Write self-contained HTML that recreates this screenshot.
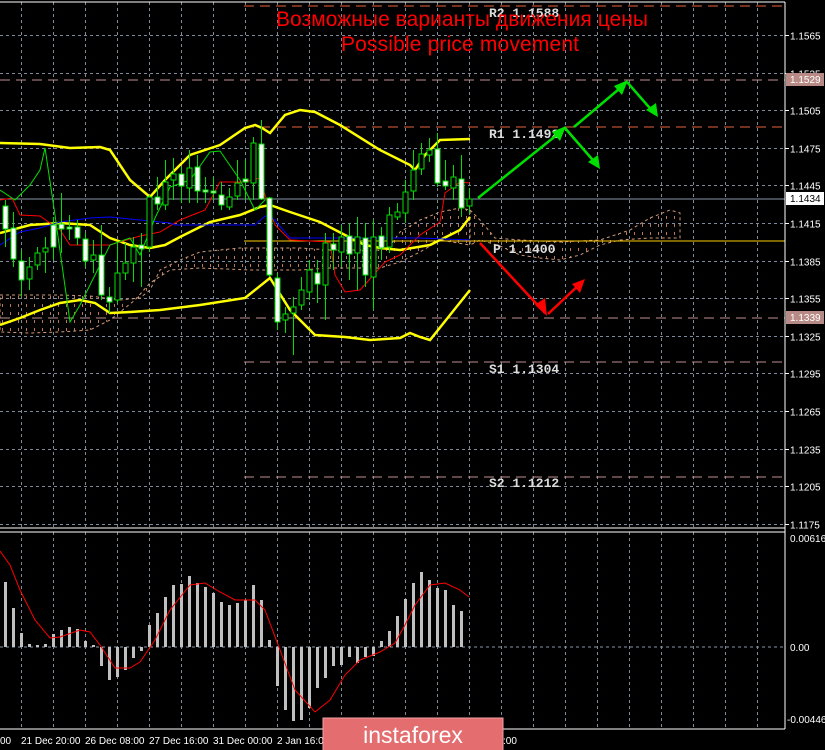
<!DOCTYPE html>
<html><head><meta charset="utf-8"><style>
html,body{margin:0;padding:0;background:#000;width:825px;height:750px;overflow:hidden}
svg{display:block}
text{font-family:"Liberation Sans",sans-serif}
.ax{fill:#fff;font-size:10px}
.lv{fill:#ddd;font-family:"Liberation Mono",monospace;font-size:13px;font-weight:bold}
</style></head><body>
<svg id="s" width="825" height="750" xmlns="http://www.w3.org/2000/svg">
<defs>
<pattern id="hatch" width="8" height="8" patternUnits="userSpaceOnUse">
<line x1="2.5" y1="0" x2="2.5" y2="3" stroke="#b87850" stroke-width="1"/>
</pattern>
</defs>
<rect width="825" height="750" fill="#000"/>
<g id="grid"></g>
<g>
<polygon points="0,295 60,295 90,296 120,300 140,298 150,290 160,270 180,260 200,252 240,248 300,248 330,250 380,250 390,246 400,232 420,220 440,212 460,208 470,210 470,245 440,240 420,252 400,262 380,268 330,268 300,270 250,270 200,268 170,270 150,283 135,300 125,308 110,320 90,330 60,332 30,333 0,332" fill="url(#hatch)" stroke="#d09a78" stroke-width="1" stroke-dasharray="3,3"/>
<polygon points="470,210 480,220 495,238 520,240 560,242 600,240 630,230 650,218 670,210 680,213 680,238 650,238 620,240 600,245 580,255 560,260 540,258 520,255 500,246 480,240 470,245" fill="url(#hatch)" stroke="#d09a78" stroke-width="1" stroke-dasharray="3,3"/>
</g>
<line x1="244" y1="6" x2="785" y2="6" stroke="#e8643c" stroke-width="1" stroke-dasharray="10,6"/>
<line x1="244" y1="127" x2="785" y2="127" stroke="#e8643c" stroke-width="1" stroke-dasharray="10,6"/>
<line x1="0" y1="80" x2="785" y2="80" stroke="#c09090" stroke-width="1" stroke-dasharray="10,6"/>
<line x1="0" y1="199" x2="785" y2="199" stroke="#8a96a8" stroke-width="1"/>
<line x1="244" y1="241" x2="785" y2="241" stroke="#ffcc00" stroke-width="1"/>
<line x1="0" y1="318" x2="785" y2="318" stroke="#c09090" stroke-width="1" stroke-dasharray="10,6"/>
<line x1="244" y1="362" x2="785" y2="362" stroke="#c09090" stroke-width="1" stroke-dasharray="10,6"/>
<line x1="244" y1="477" x2="785" y2="477" stroke="#c09090" stroke-width="1" stroke-dasharray="10,6"/>
<text class="lv" x="489" y="17">R2 1.1588</text>
<text class="lv" x="489" y="138">R1 1.1492</text>
<text class="lv" x="493" y="253">P 1.1400</text>
<text class="lv" x="489" y="373">S1 1.1304</text>
<text class="lv" x="489" y="487">S2 1.1212</text>
<polyline fill="none" stroke="#ffff00" stroke-width="2.5" points="0,143 40,144 70,148 100,147 110,150 130,180 150,197 165,180 190,155 220,145 245,128 255,125 262,128 270,133 285,115 300,110 315,112 340,125 380,150 410,165 415,170 425,155 440,140 470,139"/>
<polyline fill="none" stroke="#ffff00" stroke-width="2.5" points="0,233 30,225 60,223 90,225 110,238 130,245 150,248 165,245 180,237 210,222 240,215 260,207 270,205 290,212 320,222 345,235 365,245 380,248 400,250 430,245 460,230 470,217"/>
<polyline fill="none" stroke="#ffff00" stroke-width="2.5" points="0,325 20,318 40,310 60,303 80,300 95,303 110,313 130,312 160,310 200,305 245,298 270,278 290,310 315,335 345,337 370,340 400,338 410,333 420,337 430,340 450,315 470,290"/>
<polyline fill="none" stroke="#ff0000" stroke-width="1" points="0,200 12,198 20,215 40,216 50,223 60,230 70,245 80,245 110,245 140,236 160,232 180,220 205,210 220,182 245,182 260,178 268,205 275,225 290,240 330,242 335,275 345,292 360,290 385,262 400,255 420,235 440,222 445,193 460,182 470,183"/>
<polyline fill="none" stroke="#0000ff" stroke-width="1" points="0,245 20,232 40,228 60,222 90,218 110,217 170,223 175,225 255,225 265,216 272,217 290,238 420,238 470,240"/>
<polyline fill="none" stroke="#00e000" stroke-width="1" points="0,190 15,200 30,185 40,170 45,148 55,215 70,322 80,305 95,275 110,245 130,238 140,255 155,218 170,187 190,180 210,152 220,151 240,180 255,210 265,200"/>
<g id="candles"></g>
<g stroke-width="2.5" fill="none">
<polyline stroke="#00e000" points="478,198 563,130"/>
<polyline stroke="#00e000" points="565,128 598,166"/>
<polyline stroke="#00e000" points="574,127 625,84"/>
<polyline stroke="#00e000" points="627,82 655,114"/>
<polyline stroke="#ff0000" points="480,243 545,313"/>
<polyline stroke="#ff0000" points="548,314 581,283"/>
</g>
<g stroke="none">
<polygon fill="#00e000" points="566,126 552,132 560,141"/>
<polygon fill="#00e000" points="600,169 588,162 598,155"/>
<polygon fill="#00e000" points="628,80 614,86 622,95"/>
<polygon fill="#00e000" points="658,117 646,110 656,103"/>
<polygon fill="#ff0000" points="547,316 535,305 545,298"/>
<polygon fill="#ff0000" points="585,279 572,284 580,293"/>
</g>
<text x="462" y="26" fill="#ff0000" font-size="21" text-anchor="middle" textLength="372">Возможные варианты движения цены</text>
<text x="460" y="51" fill="#ff0000" font-size="21" text-anchor="middle" textLength="238">Possible price movement</text>
<line x1="0" y1="2" x2="785" y2="2" stroke="#fff"/>
<line x1="785" y1="2" x2="785" y2="729" stroke="#fff"/>
<line x1="0" y1="528" x2="785" y2="528" stroke="#fff"/>
<line x1="0" y1="532" x2="785" y2="532" stroke="#fff"/>
<line x1="0" y1="729" x2="785" y2="729" stroke="#fff"/>
<g id="axis"></g>
<rect x="786" y="73" width="38" height="13" fill="#b88a86"/>
<text class="ax" x="790" y="83" fill="#fff">1.1529</text>
<rect x="786" y="192" width="38" height="13" fill="#fff"/>
<text x="790" y="202" font-size="10" fill="#000">1.1434</text>
<rect x="786" y="311" width="38" height="13" fill="#b88a86"/>
<text class="ax" x="790" y="321">1.1339</text>
<line x1="0" y1="647" x2="785" y2="647" stroke="#8a96a8" stroke-dasharray="3,3"/>
<g id="macd"></g>
<polyline fill="none" stroke="#ff0000" stroke-width="1" points="0,551 10,565 20,590 35,620 50,638 60,637 80,630 90,632 100,645 115,668 130,668 140,662 155,640 170,610 190,585 205,583 220,592 235,600 255,600 265,610 280,650 295,690 315,712 330,700 345,675 360,660 380,652 395,643 405,625 415,605 430,585 445,583 460,590 469,597"/>
<text class="ax" x="790" y="542">0.00616</text>
<text class="ax" x="790" y="651">0.00</text>
<text class="ax" x="787" y="723">-0.00446</text>
<text class="ax" x="0" y="744">00</text>
<text class="ax" x="21" y="744">21 Dec 20:00</text>
<text class="ax" x="85" y="744">26 Dec 08:00</text>
<text class="ax" x="149" y="744">27 Dec 16:00</text>
<text class="ax" x="213" y="744">31 Dec 00:00</text>
<text class="ax" x="277" y="744">2 Jan 16:00</text>
<text class="ax" x="503" y="744">:00</text>
<rect x="323" y="718" width="180" height="33" fill="#e36d6f" stroke="#f4a0a0" stroke-width="1"/>
<text x="413" y="743" fill="#fff" font-size="23" text-anchor="middle">instaforex</text>
</svg>
<script>
var NS="http://www.w3.org/2000/svg";
function el(p,t,a){var e=document.createElementNS(NS,t);for(var k in a)e.setAttribute(k,a[k]);p.appendChild(e);return e;}
var g=document.getElementById("grid");
for(var k=0;k<24;k++){var x=21.5+32*k;if(x>785)break;
 el(g,"line",{x1:x,y1:2,x2:x,y2:528,stroke:"#7d8a9c","stroke-dasharray":"3,3"});
 el(g,"line",{x1:x,y1:532,x2:x,y2:729,stroke:"#7d8a9c","stroke-dasharray":"3,3"});}
var ax=document.getElementById("axis");
var pr=["1.1565","1.1535","1.1505","1.1475","1.1445","1.1415","1.1385","1.1355","1.1325","1.1295","1.1265","1.1235","1.1205","1.1175"];
for(var i=0;i<14;i++){var y=Math.round(35+37.6*i)+0.5;
 el(g,"line",{x1:0,y1:y,x2:785,y2:y,stroke:"#7d8a9c","stroke-dasharray":"3,3"});
 el(ax,"line",{x1:785,y1:y,x2:789,y2:y,stroke:"#fff"});
 var t=el(ax,"text",{x:790,y:y+4,"class":"ax"});t.textContent=pr[i];}
var C=[[206,229,200,247,1],[228,259,212,267,1],[261,280,250,297,1],[267,279,257,290,0],[253,265,247,270,0],[248,252,237,273,0],[225,247,217,260,1],[224,229,193,253,1],[227,229,215,240,1],[227,238,220,245,1],[239,261,233,267,1],[255,260,240,273,0],[255,295,225,300,1],[297,302,287,313,1],[273,300,243,303,0],[263,273,243,280,0],[247,263,237,282,0],[245,249,233,287,1],[197,247,195,252,0],[197,204,177,210,1],[182,205,160,210,0],[174,180,158,200,0],[174,186,167,203,1],[168,188,150,203,0],[167,191,155,203,1],[190,192,177,203,1],[191,193,177,200,1],[195,205,182,210,1],[197,207,188,210,0],[183,196,160,200,0],[179,182,160,200,1],[143,183,137,200,0],[144,199,120,200,1],[198,275,197,277,1],[278,322,273,330,1],[314,320,307,333,0],[307,313,297,355,0],[290,305,277,310,0],[270,292,260,300,0],[273,284,260,303,1],[243,285,233,320,0],[244,250,233,270,1],[237,252,225,267,0],[236,254,223,280,1],[237,253,217,290,0],[238,275,223,287,1],[237,277,220,310,0],[236,248,227,260,1],[215,247,207,253,0],[212,217,203,220,0],[192,213,180,223,0],[170,191,150,200,0],[154,169,143,175,0],[150,155,138,162,0],[149,183,133,187,1],[181,186,160,190,1],[177,188,165,200,0],[179,208,155,217,1],[199,206,188,213,0]];
var cg=document.getElementById("candles");
C.forEach(function(c,i){var x=5+8*i;
 el(cg,"line",{x1:x+0.5,y1:c[2],x2:x+0.5,y2:c[3],stroke:"#00e000"});
 el(cg,"rect",{x:x-2,y:c[0],width:5,height:Math.max(1,c[1]-c[0]),fill:c[4]?"#fff":"#000",stroke:"#00e000","stroke-width":1});});
var M=[582,608,633,644,645,644,634,630,627,629,641,645,666,680,677,670,658,651,625,613,597,585,584,576,583,587,593,602,605,603,600,585,600,640,686,710,721,720,708,688,678,666,665,657,663,657,656,641,631,616,599,583,572,580,588,590,605,611];
var mg=document.getElementById("macd");
M.forEach(function(v,i){var x=5+8*i;var y1=Math.min(v,647),h=Math.abs(v-647);
 el(mg,"rect",{x:x-1,y:y1,width:3,height:Math.max(1,h),fill:"#c0c0c0"});});
</script>
</body></html>
